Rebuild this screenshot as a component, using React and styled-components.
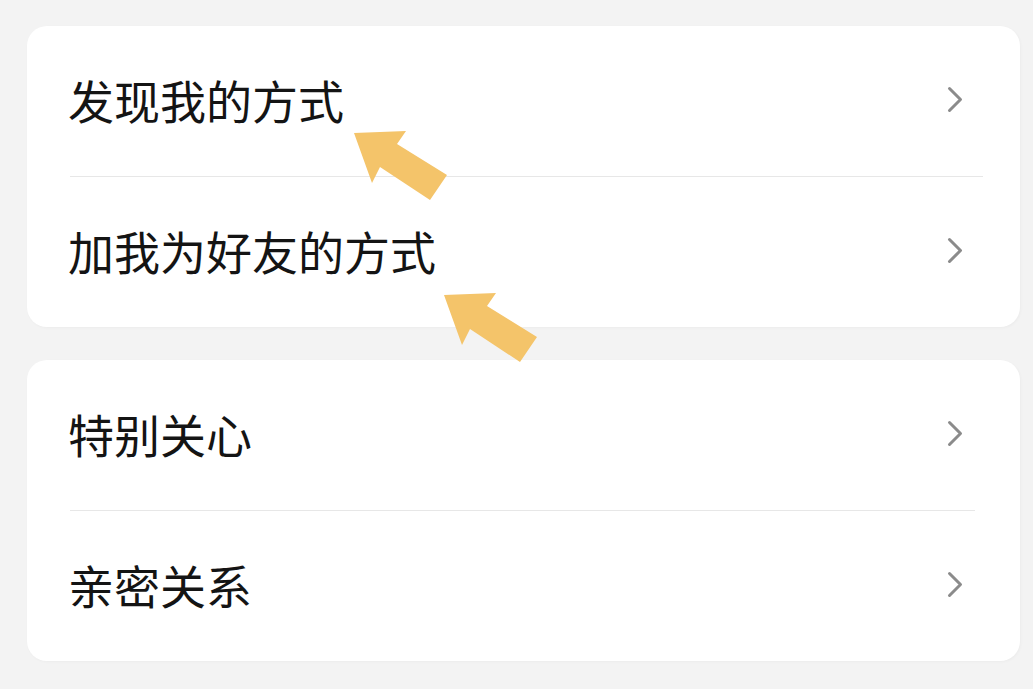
import styled, { createGlobalStyle } from 'styled-components';

const GlobalStyle = createGlobalStyle`
    html, body {
        margin: 0;
        padding: 0;
        background: #f3f3f3;
    }
`;

const Page = styled.div`
    position: relative;
    width: 1033px;
    height: 689px;
    box-sizing: border-box;
    padding: 26px 13px 0 27px;
    display: flex;
    flex-direction: column;
    gap: 33px;
    background: #f3f3f3;
    font-family: "Noto Sans CJK SC", "Noto Sans", sans-serif;
`;

const Card = styled.div`
    background: #ffffff;
    border-radius: 20px;
    box-shadow: 1px 1px 3px rgba(0, 0, 0, 0.03);
    display: flex;
    flex-direction: column;
`;

const Row = styled.div`
    height: 150px;
    display: flex;
    align-items: center;
    justify-content: space-between;
    padding: 0 57px 0 41px;
`;

const Label = styled.span`
    font-size: 46px;
    color: #141414;
    margin-top: -4px;
`;

const Divider = styled.div`
    height: 1px;
    background: #e7e7e7;
    margin: 0 ${(p) => p.$inset}px 0 43px;
`;

const ArrowMark = styled.svg`
    position: absolute;
    width: 94px;
    height: 71px;
`;

const Chevron = () => (
    <svg width="16" height="27" viewBox="0 0 16 27" style={{ marginTop: -3 }}>
        <path d="M2.5 2.5 L13.5 13.5 L2.5 24.5" fill="none" stroke="#8b8b8b" strokeWidth="3" strokeLinecap="round" strokeLinejoin="round" />
    </svg>
);

const Arrow = ({ left, top }) => (
    <ArrowMark viewBox="0 0 94 71" style={{ left, top }}>
        <polygon points="0,3 52,1 43,14 93,45 76,70 26,37 18,53" fill="#f4c46a" />
    </ArrowMark>
);

const groups = [
    { inset: 37, items: ['发现我的方式', '加我为好友的方式'] },
    { inset: 45, items: ['特别关心', '亲密关系'] },
];

const App = () => {
    return (
        <Page>
            <GlobalStyle />
            {groups.map((g, gi) => (
                <Card key={gi}>
                    {g.items.map((label, i) => (
                        <div key={label}>
                            {i > 0 && <Divider $inset={g.inset} />}
                            <Row>
                                <Label>{label}</Label>
                                <Chevron />
                            </Row>
                        </div>
                    ))}
                </Card>
            ))}
            <Arrow left={354} top={130} />
            <Arrow left={444} top={292} />
        </Page>
    );
};

export default App;
